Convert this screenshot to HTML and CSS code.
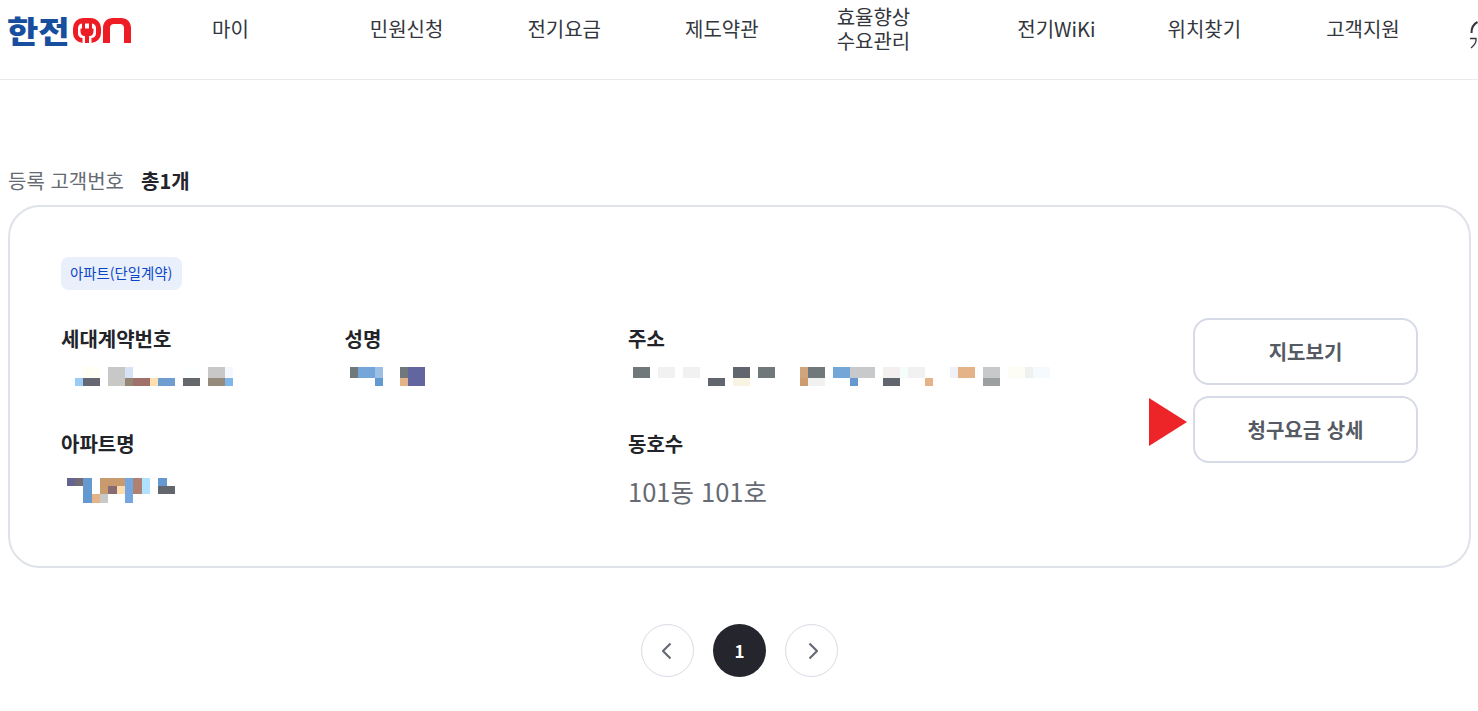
FILE: index.html
```html
<!DOCTYPE html>
<html lang="ko">
<head>
<meta charset="utf-8">
<title>등록 고객번호</title>
<link rel="stylesheet" href="styles.css">
</head>
<body>
<header class="topbar">
  <a class="logo" href="#">
    <span class="logo-han">한전</span>
    <svg class="logo-on" width="58" height="25" viewBox="0 0 58 25" aria-label="on">
      <rect x="0" y="0" width="28" height="25" rx="10" fill="#ee1c25"/>
      <rect x="5" y="5.500" width="18" height="14.500" rx="4.500" fill="#fff"/>
      <rect x="9.500" y="18" width="9" height="7" fill="#fff"/>
      <rect x="9" y="4" width="3" height="7" fill="#ee1c25"/>
      <rect x="16" y="4" width="3" height="7" fill="#ee1c25"/>
      <path fill="#ee1c25" d="M7.500 10.500h13v2.500c0 3-1.500 5-4 5h-5c-2.500 0-4-2-4-5z"/>
      <rect x="12" y="16" width="4" height="9" fill="#ee1c25"/>
      <path fill="#ee1c25" d="M30 25V10C30 4 34 0 40 0h8c6 0 10 4 10 10v15h-7V10c0-2.500-1.500-4-4-4h-6c-2.500 0-4 1.500-4 4v15z"/>
    </svg>
  </a>
  <nav class="menu">
    <a class="menu-item" href="#">마이</a>
    <a class="menu-item" href="#">민원신청</a>
    <a class="menu-item" href="#">전기요금</a>
    <a class="menu-item" href="#">제도약관</a>
    <a class="menu-item menu-two" href="#">효율향상<br>수요관리</a>
    <a class="menu-item" href="#">전기WiKi</a>
    <a class="menu-item" href="#">위치찾기</a>
    <a class="menu-item" href="#">고객지원</a>
  </nav>
  <svg class="menu-edge" width="8" height="34" viewBox="0 0 8 34">
    <path fill="none" stroke="#33363d" stroke-width="2" d="M1.500 15c0-5 2-9 6-11"/>
    <path fill="none" stroke="#33363d" stroke-width="1.300" d="M0 20.500h6v2c0 3-2 5-5 7.500"/>
  </svg>
</header>

<main class="content">
  <h2 class="count"><span class="count-label">등록 고객번호</span><strong class="count-num">총1개</strong></h2>

  <section class="card">
    <div class="card-main">
      <span class="badge">아파트(단일계약)</span>
      <dl class="fields">
        <div class="field">
          <dt>세대계약번호</dt>
          <dd class="masked">
            <svg width="200" height="19" viewBox="61 367 200 19" shape-rendering="crispEdges">
              <rect x="83" y="367" width="17" height="11" fill="#fffff5"/>
              <rect x="108" y="367" width="17" height="11" fill="#c8c8c8"/>
              <rect x="125" y="367" width="8" height="11" fill="#d8e2f5"/>
              <rect x="183" y="367" width="17" height="11" fill="#fbffff"/>
              <rect x="208" y="367" width="17" height="11" fill="#c8c8c8"/>
              <rect x="225" y="367" width="8" height="11" fill="#f5f8ff"/>
              <rect x="75" y="378" width="8" height="8" fill="#9accf5"/>
              <rect x="83" y="378" width="17" height="8" fill="#656872"/>
              <rect x="108" y="378" width="17" height="8" fill="#c8c9c6"/>
              <rect x="125" y="378" width="8" height="8" fill="#958575"/>
              <rect x="133" y="378" width="17" height="8" fill="#a0706a"/>
              <rect x="150" y="378" width="8" height="8" fill="#ffe0b0"/>
              <rect x="158" y="378" width="17" height="8" fill="#709dd0"/>
              <rect x="183" y="378" width="17" height="8" fill="#66676c"/>
              <rect x="208" y="378" width="17" height="8" fill="#958a7c"/>
              <rect x="225" y="378" width="8" height="8" fill="#7fb5ea"/>
            </svg>
          </dd>
        </div>
        <div class="field">
          <dt>성명</dt>
          <dd class="masked">
            <svg width="200" height="19" viewBox="345 367 200 19" shape-rendering="crispEdges">
              <rect x="350" y="367" width="8" height="11" fill="#71787c"/>
              <rect x="358" y="367" width="17" height="11" fill="#74a7d8"/>
              <rect x="375" y="367" width="8" height="11" fill="#9cbfe5"/>
              <rect x="400" y="367" width="8" height="11" fill="#71787c"/>
              <rect x="408" y="367" width="17" height="19" fill="#62659f"/>
              <rect x="375" y="378" width="8" height="8" fill="#6299d0"/>
              <rect x="400" y="378" width="8" height="8" fill="#e5b388"/>
            </svg>
          </dd>
        </div>
        <div class="field">
          <dt>주소</dt>
          <dd class="masked">
            <svg width="430" height="19" viewBox="628 367 430 19" shape-rendering="crispEdges">
              <rect x="633" y="367" width="17" height="11" fill="#71787c"/>
              <rect x="658" y="367" width="17" height="11" fill="#f0f1f0"/>
              <rect x="683" y="367" width="17" height="11" fill="#f0f1f0"/>
              <rect x="733" y="367" width="17" height="11" fill="#60656e"/>
              <rect x="758" y="367" width="17" height="11" fill="#71787c"/>
              <rect x="800" y="367" width="8" height="11" fill="#d0a47c"/>
              <rect x="808" y="367" width="17" height="11" fill="#71787c"/>
              <rect x="833" y="367" width="17" height="11" fill="#74a7d8"/>
              <rect x="850" y="367" width="25" height="11" fill="#c8c9cb"/>
              <rect x="883" y="367" width="17" height="11" fill="#f5f0f0"/>
              <rect x="900" y="367" width="8" height="11" fill="#f5fdfb"/>
              <rect x="908" y="367" width="17" height="11" fill="#f0f1f0"/>
              <rect x="950" y="367" width="8" height="11" fill="#f0f0f8"/>
              <rect x="958" y="367" width="17" height="11" fill="#e5b388"/>
              <rect x="983" y="367" width="17" height="11" fill="#c8c9cb"/>
              <rect x="1008" y="367" width="17" height="11" fill="#fdfdf5"/>
              <rect x="1025" y="367" width="8" height="11" fill="#eff1f0"/>
              <rect x="1033" y="367" width="17" height="11" fill="#f5faff"/>
              <rect x="708" y="378" width="17" height="8" fill="#60656e"/>
              <rect x="733" y="378" width="17" height="8" fill="#f8f3e2"/>
              <rect x="800" y="378" width="8" height="8" fill="#cc9c6e"/>
              <rect x="808" y="378" width="17" height="8" fill="#f0f1f0"/>
              <rect x="850" y="378" width="8" height="8" fill="#6699d0"/>
              <rect x="883" y="378" width="17" height="8" fill="#60656e"/>
              <rect x="925" y="378" width="8" height="8" fill="#e5b388"/>
              <rect x="983" y="378" width="17" height="8" fill="#9ca0a0"/>
            </svg>
          </dd>
        </div>
        <div class="field">
          <dt>아파트명</dt>
          <dd class="masked masked-tall">
            <svg width="200" height="25" viewBox="61 478 200 25" shape-rendering="crispEdges">
              <rect x="67" y="478" width="8" height="8" fill="#62638f"/>
              <rect x="75" y="478" width="8" height="8" fill="#736a74"/>
              <rect x="83" y="478" width="9" height="25" fill="#6499d0"/>
              <rect x="100" y="478" width="25" height="8" fill="#c89a6e"/>
              <rect x="125" y="478" width="8" height="16" fill="#74a7e0"/>
              <rect x="133" y="478" width="9" height="16" fill="#b08070"/>
              <rect x="142" y="478" width="8" height="16" fill="#b0e2ff"/>
              <rect x="158" y="478" width="9" height="8" fill="#6699d0"/>
              <rect x="100" y="486" width="8" height="8" fill="#c99c70"/>
              <rect x="108" y="486" width="9" height="8" fill="#886a72"/>
              <rect x="117" y="486" width="8" height="8" fill="#ffdcab"/>
              <rect x="158" y="486" width="17" height="8" fill="#63666c"/>
              <rect x="92" y="494" width="8" height="9" fill="#e5b388"/>
              <rect x="100" y="494" width="8" height="9" fill="#c8c8c8"/>
              <rect x="125" y="494" width="8" height="9" fill="#74a7e0"/>
            </svg>
          </dd>
        </div>
        <div class="field field-empty"></div>
        <div class="field">
          <dt>동호수</dt>
          <dd class="unit">101동 101호</dd>
        </div>
      </dl>
    </div>
    <div class="actions">
      <span class="pointer"></span>
      <button class="action" type="button">지도보기</button>
      <button class="action" type="button">청구요금 상세</button>
    </div>
  </section>

  <nav class="pager">
    <a class="page page-arrow" href="#">
      <svg width="12" height="18" viewBox="0 0 12 18"><path fill="none" stroke="#666a75" stroke-width="2.200" d="M8.500 1.500L1 9l7.500 7.500"/></svg>
    </a>
    <a class="page page-current" href="#">1</a>
    <a class="page page-arrow" href="#">
      <svg width="12" height="18" viewBox="0 0 12 18"><path fill="none" stroke="#666a75" stroke-width="2.200" d="M3.500 1.500L11 9l-7.500 7.500"/></svg>
    </a>
  </nav>
</main>
</body>
</html>
```

FILE: styles.css
```css
* { box-sizing: border-box; }
html, body { margin: 0; padding: 0; }
body {
  background: #fff;
  color: #22242a;
  font-family: "Noto Sans CJK KR", "Noto Sans", sans-serif;
  overflow: hidden;
}
a { color: inherit; text-decoration: none; }

.topbar {
  display: flex;
  align-items: flex-start;
  height: 80px;
  border-bottom: 1px solid #e8eaee;
  overflow: hidden;
  position: relative;
}
.logo {
  display: flex;
  align-items: center;
  flex: none;
  width: 212px;
  height: 61px;
  padding-left: 7px;
}
.logo-han {
  flex: none;
  width: 66px;
  color: #174f9e;
  font-size: 31px;
  font-weight: 900;
  line-height: 1;
  white-space: nowrap;
  transform: translateY(-1px) scaleX(1.1);
  transform-origin: left center;
}
.logo-on { flex: none; }
.menu {
  display: flex;
  align-items: center;
  height: 58px;
  font-size: 20px;
  color: #33363d;
  line-height: 24px;
}
.menu-item { flex: none; text-align: center; white-space: nowrap; }
.menu-item:nth-child(2) { margin-left: 121px; }
.menu-item:nth-child(3) { margin-left: 84px; }
.menu-item:nth-child(4) { margin-left: 84px; }
.menu-item:nth-child(5) { margin-left: 78px; }
.menu-item:nth-child(6) { margin-left: 107px; }
.menu-item:nth-child(7) { margin-left: 72px; }
.menu-item:nth-child(8) { margin-left: 85px; }
.menu-edge { position: absolute; left: 1470px; top: 18px; }

.content { padding: 0 7px 0 8px; }
.count {
  display: flex;
  gap: 17px;
  margin: 87px 0 0;
  height: 28px;
  align-items: center;
  font-size: 20px;
  font-weight: 400;
  line-height: 28px;
}
.count-label { color: #666a72; }
.count-num { color: #22242a; font-weight: 700; }

.card {
  display: flex;
  justify-content: space-between;
  height: 363px;
  margin-top: 10px;
  padding: 50px 51px 0;
  border: 2px solid #dfe2e8;
  border-radius: 32px;
}
.card-main { flex: 1; }
.badge {
  display: inline-block;
  height: 33px;
  padding: 0 10px 0 9px;
  border-radius: 8px;
  background: #e9effb;
  color: #0b47c4;
  font-size: 14.400px;
  line-height: 31px;
}
.fields {
  display: grid;
  grid-template-columns: 283.500px 283.500px 1fr;
  margin: 34px 0 0;
}
.field { margin: 0; height: 105px; }
.field dt {
  font-size: 20px;
  font-weight: 700;
  line-height: 30px;
  color: #22242a;
}
.field dd { margin: 0; }
.masked { padding-top: 13px; line-height: 0; }
.masked svg { display: block; }
.masked-tall { padding-top: 19px; }
.unit {
  margin-top: 13px !important;
  font-size: 25.500px;
  line-height: 38px;
  color: #666a72;
}

.actions {
  position: relative;
  flex: none;
  display: flex;
  flex-direction: column;
  gap: 11px;
  width: 225px;
  padding-top: 61px;
}
.action {
  height: 67px;
  background: #fff;
  border: 2px solid #d6dae6;
  border-radius: 16px;
  color: #555a63;
  font-family: inherit;
  font-size: 20px;
  font-weight: 700;
}
.pointer {
  position: absolute;
  left: -44px;
  top: 141px;
  width: 38px;
  height: 48px;
  background: #ee2528;
  clip-path: polygon(0 0, 100% 50%, 0 100%);
}

.pager {
  display: flex;
  justify-content: center;
  gap: 19px;
  margin-top: 56px;
}
.page {
  display: flex;
  align-items: center;
  justify-content: center;
  width: 53px;
  height: 53px;
  border-radius: 50%;
}
.page-arrow { border: 1px solid #d8dbe4; background: #fff; }
.page-current {
  background: #24252d;
  color: #fff;
  font-size: 17px;
  font-weight: 700;
}
```
